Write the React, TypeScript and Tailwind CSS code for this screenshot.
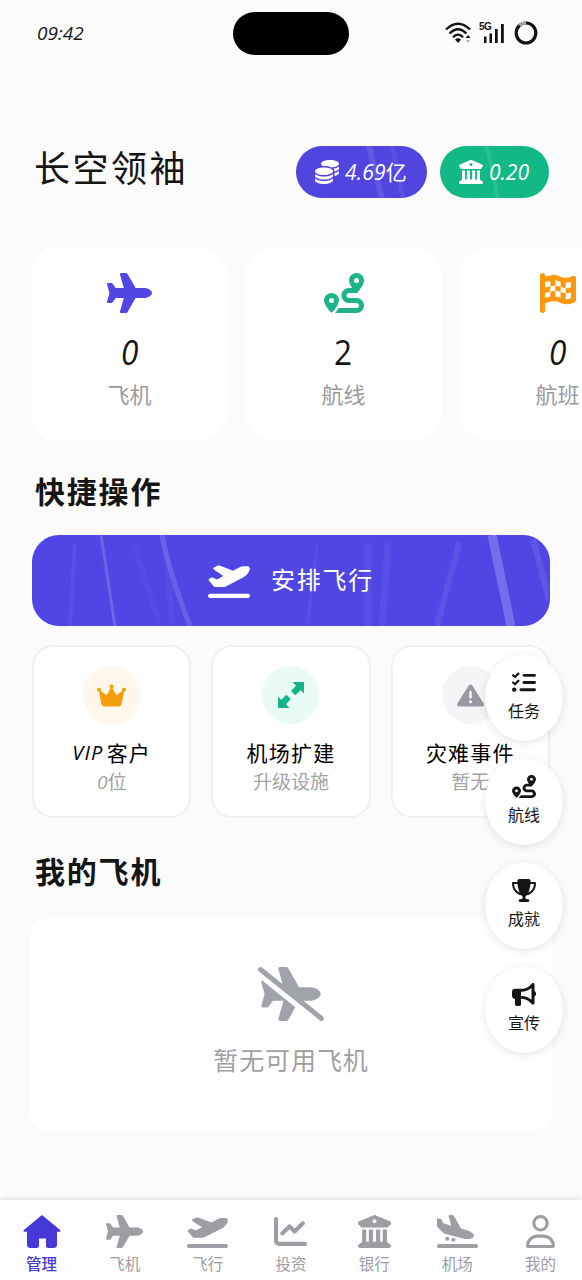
import type { ReactNode } from "react";
import type { IconType } from "react-icons";
import {
  FaBuildingColumns,
  FaBullhorn,
  FaChartLine,
  FaCoins,
  FaCrown,
  FaFlagCheckered,
  FaListCheck,
  FaPlane,
  FaPlaneArrival,
  FaPlaneDeparture,
  FaPlaneSlash,
  FaRegUser,
  FaRoute,
  FaTriangleExclamation,
  FaTrophy,
} from "react-icons/fa6";

function HouseGlyph({ className }: { className?: string }) {
  return (
    <svg viewBox="0 0 38 33" fill="currentColor" stroke="currentColor" strokeLinejoin="round" className={className}>
      <path strokeWidth="2" d="M19 1.300L36.500 15.800H33V29.500Q33 32 30.500 32H25Q24 32 24 30.500V22.500H15V30.500Q15 32 13.500 32H7.500Q5 32 5 29.500V15.800H1.500z" />
    </svg>
  );
}

function ExpandGlyph({ className }: { className?: string }) {
  return (
    <svg viewBox="0 0 28 28" fill="currentColor" className={className}>
      <path d="M15.500 1H27V12.500L23.700 9.300L18.300 14.300L14 10L19 4.800z" />
      <path d="M12.500 27H1V15.500L4.300 18.700L9.300 13.700L13.800 18L9 23.200z" />
    </svg>
  );
}

const stats = [
  { icon: FaPlane, iconClass: "w-[45px] text-[#5046e4]", value: "0", label: "飞机", italic: true },
  { icon: FaRoute, iconClass: "w-[40px] text-[#1db48c]", value: "2", label: "航线", italic: false },
  { icon: FaFlagCheckered, iconClass: "w-[36px] text-[#fb980f]", value: "0", label: "航班", italic: true },
];

const actions = [
  {
    icon: FaCrown,
    circle: "bg-[#fff7eb]",
    iconClass: "w-[29px] h-[25px] text-[#f59e0b]",
    title: <><span className="mr-[3px] text-[20px] italic">VIP</span>客户</>,
    note: <><i>0</i>位</>,
  },
  {
    icon: ExpandGlyph as IconType,
    circle: "bg-[#e9fbf7]",
    iconClass: "w-[28px] h-[28px] text-[#16b48a]",
    title: "机场扩建",
    note: "升级设施",
  },
  {
    icon: FaTriangleExclamation,
    circle: "bg-[#f5f5f7]",
    iconClass: "w-[27px] h-[25px] text-[#9a99a3]",
    title: "灾难事件",
    note: "暂无",
  },
];

const shortcuts = [
  { icon: FaListCheck, label: "任务" },
  { icon: FaRoute, label: "航线" },
  { icon: FaTrophy, label: "成就" },
  { icon: FaBullhorn, label: "宣传" },
];

const tabs = [
  { icon: HouseGlyph as IconType, iconClass: "w-[38px]", label: "管理", active: true },
  { icon: FaPlane, iconClass: "w-[37px]", label: "飞机" },
  { icon: FaPlaneDeparture, iconClass: "w-[41px]", label: "飞行" },
  { icon: FaChartLine, iconClass: "w-[33px]", label: "投资" },
  { icon: FaBuildingColumns, iconClass: "w-[33px]", label: "银行" },
  { icon: FaPlaneArrival, iconClass: "w-[41px]", label: "机场" },
  { icon: FaRegUser, iconClass: "w-[29px]", label: "我的" },
];

function Icon({ icon: Glyph, className }: { icon: IconType; className: string }) {
  return <Glyph preserveAspectRatio="none" className={`shrink-0 ${className}`} />;
}

function StatusBar() {
  return (
    <div className="flex h-[66px] items-center pl-[37px] pr-[44px]">
      <span className="w-[196px] text-[19px] italic leading-none">09:42</span>
      <div className="h-[43px] w-[116px] rounded-full bg-black" />
      <div className="ml-auto flex items-center">
        <svg width="28" height="22" viewBox="0 0 28 22" fill="none" stroke="#111" strokeWidth="2.400">
          <path d="M1 7.500Q13 -4 25 7.500M4.500 11.500Q13 3 21.500 11.500M8 15.300Q13 10 18 15.300" />
          <path d="M10 17.500q3-2.500 6 0l-3 3.500z" fill="#111" stroke="none" />
          <path d="M20.500 16l2.500-3 2.500 3z" fill="#111" stroke="none" />
          <path d="M20.500 18h5l-2.500 3z" fill="#bbb" stroke="none" />
        </svg>
        <div className="relative ml-[6px] h-[22px] w-[28px]">
          <span className="absolute top-0 left-0 font-['Liberation_Sans'] text-[10px] font-bold leading-none tracking-[-0.5px]">
            5G
          </span>
          <svg width="28" height="22" viewBox="0 0 28 22" fill="#111">
            <path d="M5 14.500h2.500v6.500H5zM10.500 11.500H13V21h-2.500zM16 7h2.700v14H16zM22 2h2.800v19H22z" />
          </svg>
        </div>
        <svg width="24" height="26" viewBox="0 0 24 26" fill="none" strokeWidth="3.200" className="ml-[7px]">
          <ellipse cx="12" cy="13" rx="9.800" ry="10" stroke="#111" />
          <path d="M5.500 5.400Q8.500 3 12 3" stroke="#aaa" />
        </svg>
      </div>
    </div>
  );
}

function Balance({ icon, className, children }: { icon: IconType; className: string; children: ReactNode }) {
  return (
    <div
      className={`relative flex h-[52px] items-center overflow-hidden rounded-full pl-[19px] text-[21px] leading-none text-white ${className}`}
    >
      <Icon icon={icon} className="mr-[6px] h-[24px] w-[24px]" />
      {children}
    </div>
  );
}

function Heading({ children }: { children: ReactNode }) {
  return <h2 className="pl-[3px] text-[30px] font-bold leading-[36px] tracking-[1.800px]">{children}</h2>;
}

function Streaks() {
  return (
    <svg className="absolute inset-0" width="517" height="91" viewBox="0 0 517 91" fill="none" stroke="#8d87f5">
      <path d="M43 8L38 91" strokeWidth="4" opacity=".15" />
      <path d="M69 0L83 91" strokeWidth="3" opacity=".45" />
      <path d="M103 12L128 91" strokeWidth="5" opacity=".1" />
      <path d="M130 0Q137 38 158 91" strokeWidth="5" opacity=".4" />
      <path d="M135 20L140 91" strokeWidth="6" opacity=".1" />
      <path d="M285 10L275 91" strokeWidth="3" opacity=".15" />
      <path d="M336 8V91" strokeWidth="7" opacity=".14" />
      <path d="M356 8L350 91" strokeWidth="7" opacity=".14" />
      <path d="M427 8L405 91" strokeWidth="6" opacity=".2" />
      <path d="M460 0L479 91" strokeWidth="9" opacity=".6" />
      <path d="M501 4L517 65" strokeWidth="6" opacity=".25" />
    </svg>
  );
}

export default function App() {
  return (
    <div className="relative flex h-[1280px] w-[582px] flex-col overflow-hidden bg-[#fbfbfb] font-['Open_Sans','Noto_Sans_CJK_SC',sans-serif] text-[#151515]">
      <StatusBar />

      <header className="mt-[80px] flex h-[52px] items-center pl-[34px] pr-[33px]">
        <h1 className="-mt-1.5 text-[36px] font-normal leading-none tracking-[2.500px]">长空领袖</h1>
        <div className="ml-auto flex gap-[13px]">
          <Balance icon={FaCoins} className="w-[131px] bg-[#5045df]">
            <svg className="absolute inset-0" width="131" height="52" fill="none" stroke="#9993f5">
              <path d="M73 0L86 52" strokeWidth="6" opacity=".25" />
              <path d="M96 0L107 52" strokeWidth="5" opacity=".15" />
            </svg>
            <span className="relative flex items-center">
              <i className="tracking-[0.200px]">4.69</i>亿
            </span>
          </Balance>
          <Balance icon={FaBuildingColumns} className="w-[109px] bg-[#12b987]">
            <svg className="absolute inset-0" width="109" height="52" fill="none" stroke="#7be0bf">
              <path d="M47 0L58 52" strokeWidth="4" opacity=".22" />
            </svg>
            <i className="relative">0.20</i>
          </Balance>
        </div>
      </header>

      <section className="mt-[49px] flex shrink-0 gap-[17px] pl-[31px]">
        {stats.map((s) => (
          <div key={s.label} className="flex h-[194px] w-[197px] shrink-0 flex-col items-center rounded-[30px] bg-white pt-[26px]">
            <Icon icon={s.icon} className={`h-[40px] ${s.iconClass}`} />
            <span className={`mt-[21px] scale-x-90 text-[35px] leading-[36px] ${s.italic ? "italic" : ""}`}>{s.value}</span>
            <span className="mt-[12px] text-[22px] leading-[24px] text-[#9b9b9d]">{s.label}</span>
          </div>
        ))}
      </section>

      <main className="flex flex-col px-[32px]">
        <div className="mt-[33px]">
          <Heading>快捷操作</Heading>
        </div>
        <button className="relative mt-[25px] flex h-[91px] items-center justify-center overflow-hidden rounded-[27px] bg-[#5046e3] text-white">
          <Streaks />
          <Icon icon={FaPlaneDeparture} className="relative mr-[21px] h-[35px] w-[42px]" />
          <span className="relative -mt-0.5 text-[24px] leading-none tracking-[1.800px]">安排飞行</span>
        </button>

        <div className="mt-[19px] grid grid-cols-3 gap-[20px]">
          {actions.map((a, i) => (
            <div
              key={i}
              className="flex h-[173px] flex-col items-center rounded-[21px] border-2 border-[#f0f0f1] bg-white pt-[19px]"
            >
              <div className={`flex h-[58px] w-[57px] items-center justify-center rounded-full ${a.circle}`}>
                <Icon icon={a.icon} className={a.iconClass} />
              </div>
              <span className="mt-[17px] flex items-center text-[21px] leading-[24px] tracking-[1.200px] text-black">
                {a.title}
              </span>
              <span className="mt-[7px] text-[19px] leading-[20px] text-[#a3a3a3]">{a.note}</span>
            </div>
          ))}
        </div>

        <div className="mt-[36px]">
          <Heading>我的飞机</Heading>
        </div>
        <div className="-mx-[2px] mt-[28px] flex h-[213px] flex-col items-center rounded-[20px] bg-white pt-[49px]">
          <Icon icon={FaPlaneSlash} className="h-[54px] w-[66px] text-[#a0a4aa]" />
          <span className="mt-[24px] text-[25px] leading-[30px] tracking-[0.900px] text-[#9fa0a3]">暂无可用飞机</span>
        </div>
      </main>

      <div className="absolute left-[485px] top-[654px] flex flex-col gap-[17px]">
        {shortcuts.map((s) => (
          <button
            key={s.label}
            className="flex h-[87px] w-[78px] flex-col items-center rounded-[50%] bg-[#fefefe] pt-[17px] shadow-[0_2px_8px_rgba(0,0,0,0.11)]"
          >
            <Icon icon={s.icon} className="h-[23px] w-[24px]" />
            <span className="mt-[8px] text-[16px] leading-[18px]">{s.label}</span>
          </button>
        ))}
      </div>

      <nav className="mt-auto grid h-[80px] shrink-0 grid-cols-7 bg-[#fdfdfe] pt-[15px] shadow-[0_-1px_6px_rgba(0,0,0,0.12)]">
        {tabs.map((t) => (
          <div
            key={t.label}
            className={`flex flex-col items-center ${t.active ? "font-medium text-[#4439d6]" : "text-[#9d9da3]"}`}
          >
            <Icon icon={t.icon} className={`h-[33px] ${t.iconClass}`} />
            <span className="mt-[6px] text-[15.500px] leading-[20px]">{t.label}</span>
          </div>
        ))}
      </nav>
    </div>
  );
}
